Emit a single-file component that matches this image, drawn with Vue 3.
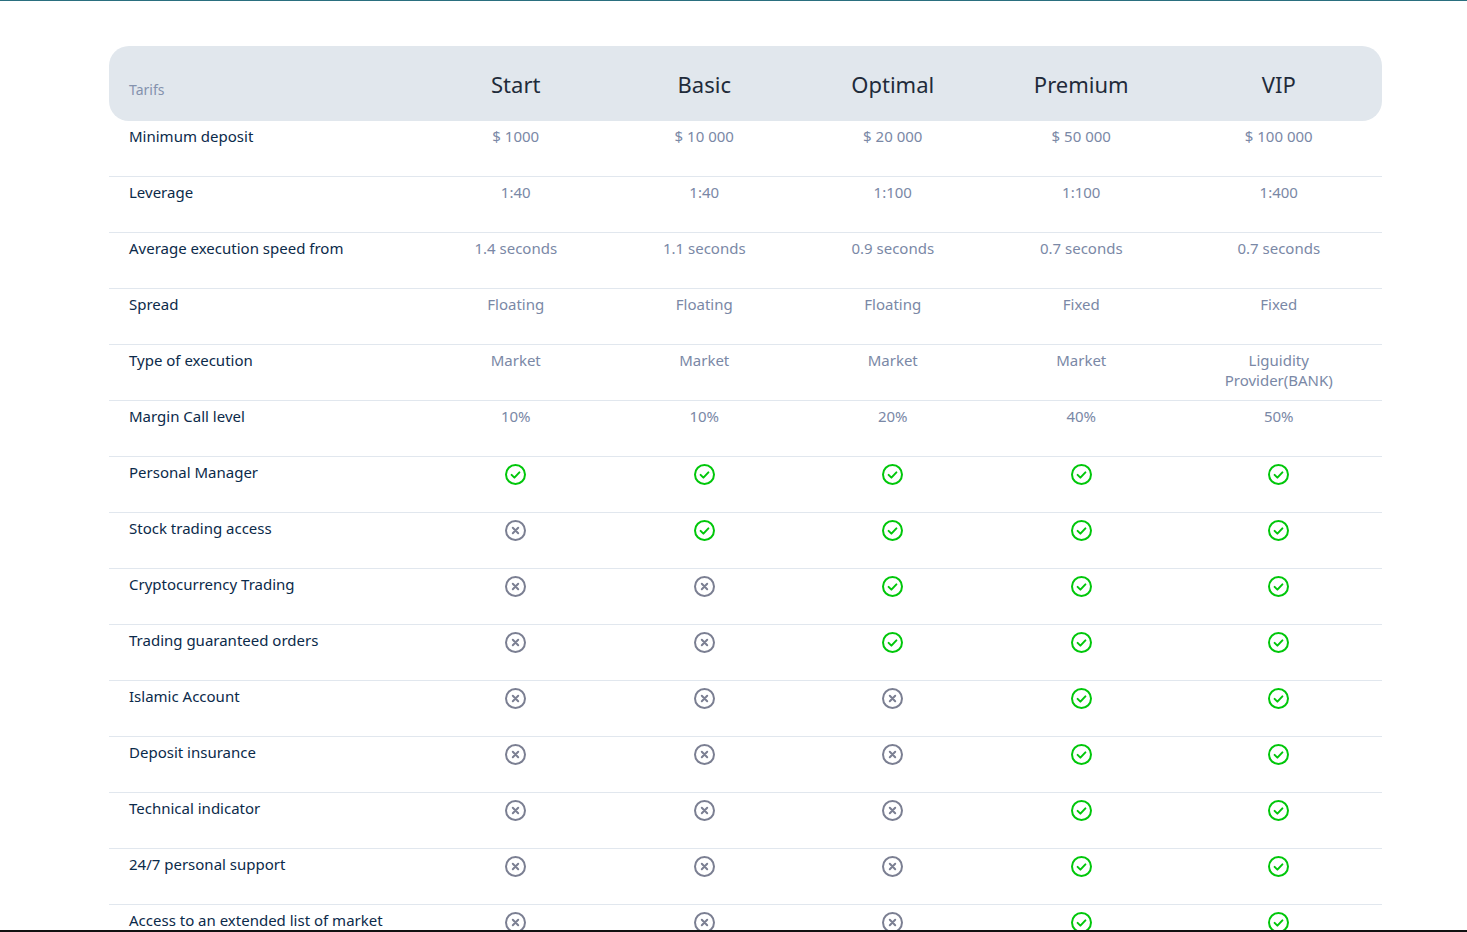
<script setup>
const plans = ['Start', 'Basic', 'Optimal', 'Premium', 'VIP']

const textRows = [
  { label: 'Minimum deposit', values: ['$ 1000', '$ 10 000', '$ 20 000', '$ 50 000', '$ 100 000'] },
  { label: 'Leverage', values: ['1:40', '1:40', '1:100', '1:100', '1:400'] },
  { label: 'Average execution speed from', values: ['1.4 seconds', '1.1 seconds', '0.9 seconds', '0.7 seconds', '0.7 seconds'] },
  { label: 'Spread', values: ['Floating', 'Floating', 'Floating', 'Fixed', 'Fixed'] },
  { label: 'Type of execution', values: ['Market', 'Market', 'Market', 'Market', 'Liguidity Provider(BANK)'] },
  { label: 'Margin Call level', values: ['10%', '10%', '20%', '40%', '50%'] }
]

// from = index of the first plan that has the feature
const features = [
  { label: 'Personal Manager', from: 0 },
  { label: 'Stock trading access', from: 1 },
  { label: 'Cryptocurrency Trading', from: 2 },
  { label: 'Trading guaranteed orders', from: 2 },
  { label: 'Islamic Account', from: 3 },
  { label: 'Deposit insurance', from: 3 },
  { label: 'Technical indicator', from: 3 },
  { label: '24/7 personal support', from: 3 },
  { label: 'Access to an extended list of market', from: 3 }
]
</script>

<template>
  <div class="page">
    <div class="content">
      <div class="tarifs">
        <div class="row head">
          <div class="title">Tarifs</div>
          <div v-for="plan in plans" :key="plan" class="plan">{{ plan }}</div>
        </div>

        <div v-for="row in textRows" :key="row.label" class="row">
          <div class="label">{{ row.label }}</div>
          <div v-for="(value, i) in row.values" :key="i" class="cell">
            <span class="value">{{ value }}</span>
          </div>
        </div>

        <div v-for="row in features" :key="row.label" class="row">
          <div class="label">{{ row.label }}</div>
          <div v-for="(plan, i) in plans" :key="plan" class="cell">
            <svg v-if="i >= row.from" class="icon yes" viewBox="0 0 21 21">
              <circle cx="10.5" cy="10.5" r="9.5" />
              <path d="M6.6 10.9l2.8 2.7 5-5.2" />
            </svg>
            <svg v-else class="icon no" viewBox="0 0 21 21">
              <circle cx="10.5" cy="10.5" r="9.5" />
              <path d="M7.8 7.8l5.4 5.4M13.2 7.8l-5.4 5.4" />
            </svg>
          </div>
        </div>
      </div>
    </div>
    <div class="bottom-line"></div>
  </div>
</template>

<style scoped>
.page {
  height: 100vh;
  display: flex;
  flex-direction: column;
  overflow: hidden;
  background-color: #fff;
  border-top: 1px solid #2a6f7f;
  box-sizing: border-box;
  font-family: "Noto Sans", "Open Sans", sans-serif;
}
.content {
  flex: 1;
  min-height: 0;
  overflow: hidden;
  padding: 45px 85px 0 109px;
}
.row {
  display: grid;
  grid-template-columns: 312.5px repeat(4, 188.5px) 206.5px;
  height: 56px;
  box-sizing: border-box;
  border-bottom: 1px solid #e1e7ee;
}
.head {
  height: 75px;
  align-items: center;
  background-color: #e1e7ed;
  border-bottom: none;
  border-radius: 20px;
}
.title {
  padding: 11px 0 0 20px;
  font-size: 14px;
  color: #8492ad;
}
.plan {
  text-align: center;
  font-size: 22px;
  color: #1f2b3a;
}
.label {
  padding: 5px 0 0 20px;
  font-size: 15px;
  line-height: 20px;
  color: #0b2a4a;
}
.cell {
  padding-top: 5px;
  text-align: center;
  font-size: 15px;
  line-height: 20px;
  color: #7a88a6;
}
.value {
  display: inline-block;
  max-width: 130px;
}
.icon {
  display: block;
  width: 21px;
  height: 21px;
  margin: 2px auto 0;
  fill: none;
  stroke-width: 2;
  stroke-linecap: round;
  stroke-linejoin: round;
}
.yes {
  stroke: #00c70a;
}
.no {
  stroke: #7b7f92;
}
.bottom-line {
  flex: none;
  height: 2px;
  background-color: #111;
}
</style>
